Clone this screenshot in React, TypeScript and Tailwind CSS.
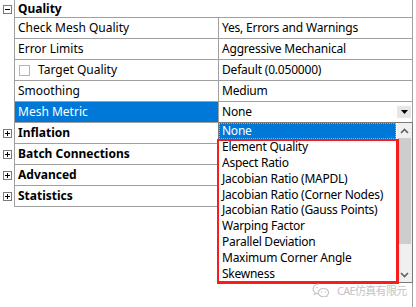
import type { ReactNode } from "react";

const LINE = "border-[#a0a0a0]";

const ExpandBox = ({ open }: { open?: boolean }) => (
  <svg width="9" height="9" viewBox="0 0 9 9" className="block">
    <rect x="0.5" y="0.5" width="8" height="8" fill="#fff" stroke="#7a7a7a" />
    <path d="M2 4.5H7" stroke="#000" />
    {!open && <path d="M4.5 2V7" stroke="#000" />}
  </svg>
);

const Gutter = ({ children }: { children?: ReactNode }) => (
  <div className="w-[14px] shrink-0 flex items-center pl-[3px]">{children}</div>
);

const GroupRow = ({
  label,
  open,
  first,
}: {
  label: string;
  open?: boolean;
  first?: boolean;
}) => (
  <div className={`flex ${first ? "h-[18px]" : "h-[21px]"}`}>
    <Gutter>
      <ExpandBox open={open} />
    </Gutter>
    <div
      className={`flex-1 flex items-center pl-[3px] font-bold border-l border-b ${LINE}`}
    >
      {label}
    </div>
  </div>
);

const PropRow = ({
  label,
  value,
  selected,
}: {
  label: ReactNode;
  value: ReactNode;
  selected?: boolean;
}) => (
  <div className="flex h-[21px]">
    <Gutter />
    <div className={`flex-1 flex border-l border-b ${LINE}`}>
      <div
        className={`w-[204px] shrink-0 flex items-center pl-[3px] border-r ${LINE} ${
          selected ? "bg-[#0078d7] text-white" : ""
        }`}
      >
        {label}
      </div>
      <div className="flex-1 flex items-center pl-[3px] tracking-[-0.2px]">
        {value}
      </div>
    </div>
  </div>
);

const metrics = [
  "Element Quality",
  "Aspect Ratio",
  "Jacobian Ratio (MAPDL)",
  "Jacobian Ratio (Corner Nodes)",
  "Jacobian Ratio (Gauss Points)",
  "Warping Factor",
  "Parallel Deviation",
  "Maximum Corner Angle",
  "Skewness",
];

const Chevron = ({ up }: { up?: boolean }) => (
  <svg width="9" height="6" viewBox="0 0 9 6" className="block">
    <path
      d={up ? "M1 5L4.5 1.5L8 5" : "M1 1L4.5 4.5L8 1"}
      fill="none"
      stroke="#606060"
      strokeWidth="1.6"
    />
  </svg>
);

export default function App() {
  return (
    <div className="relative w-[416px] h-[307px] bg-white overflow-hidden text-[12px] leading-none text-black font-['Noto_Sans',sans-serif]">
      <div className={`w-[413px] h-[307px] border-r ${LINE}`}>
        <GroupRow label="Quality" open first />
        <PropRow label="Check Mesh Quality" value="Yes, Errors and Warnings" />
        <PropRow label="Error Limits" value="Aggressive Mechanical" />
        <PropRow
          label={
            <span className="flex items-center">
              <span className="w-[11px] h-[11px] border border-[#b4b4b4] ml-[1px] mr-[8px]" />
              Target Quality
            </span>
          }
          value="Default (0.050000)"
        />
        <PropRow label="Smoothing" value="Medium" />
        <PropRow
          label="Mesh Metric"
          selected
          value={
            <div className="flex-1 flex items-center justify-between pr-[1px]">
              <span>None</span>
              <span className="w-[14px] h-[12px] bg-[#e6e6e6] flex items-center justify-center">
                <svg width="7" height="4" viewBox="0 0 7 4">
                  <path d="M0 0H7L3.5 4Z" fill="#000" />
                </svg>
              </span>
            </div>
          }
        />
        <GroupRow label="Inflation" />
        <GroupRow label="Batch Connections" />
        <GroupRow label="Advanced" />
        <GroupRow label="Statistics" />
      </div>

      {/* dropdown list */}
      <div className="absolute left-[218px] top-[122px] w-[195px] h-[161px] bg-white border border-[#7a7a7a] flex tracking-[-0.25px]">
        <div className="flex-1 flex flex-col">
          <div className="h-[16px] mr-[1px] bg-[#0078d7] text-white border border-dotted border-[#f0a040] flex items-center pl-[2px]">
            None
          </div>
          {metrics.map((m) => (
            <div key={m} className="h-[16px] flex items-center pl-[3px]">
              {m}
            </div>
          ))}
        </div>
        <div className="w-[15px] bg-[#f0f0f0] flex flex-col">
          <div className="h-[15px] flex items-center justify-center">
            <Chevron up />
          </div>
          <div className="h-[106px] bg-[#cdcdcd] mx-[1px]" />
          <div className="flex-1" />
          <div className="h-[15px] flex items-center justify-center">
            <Chevron />
          </div>
        </div>
      </div>

      {/* annotation */}
      <div className="absolute left-[217px] top-[139px] w-[182px] h-[145px] border-t-2 border-l-2 border-r-[3px] border-b-[3px] border-[#f81d1d]" />

      {/* watermark */}
      <div className="absolute left-[312px] top-[283px] flex items-center gap-[7px] text-[#c4c4c4] text-[11px] font-['Noto_Sans','Noto_Sans_CJK_SC',sans-serif] tracking-[-0.7px]">
        <svg width="18" height="14" viewBox="0 0 18 14" className="block">
          <path
            d="M7 1C3.7 1 1 3.2 1 5.9c0 1.5.8 2.8 2 3.7L2.5 11.5 4.8 10.3c.7.2 1.4.3 2.2.3"
            fill="none"
            stroke="#c4c4c4"
            strokeWidth="1.1"
          />
          <path
            d="M11.5 5.5c-3 0-5.3 1.9-5.3 4.1s2.3 4.1 5.3 4.1c.6 0 1.2-.1 1.8-.3l1.8 1-.4-1.6c1.2-.8 2-1.9 2-3.2 0-2.2-2.3-4.100-5.2-4.1z"
            fill="none"
            stroke="#c4c4c4"
            strokeWidth="1.1"
          />
          <circle cx="5" cy="4.5" r="0.8" fill="#c4c4c4" />
          <circle cx="9.5" cy="9" r="0.7" fill="#c4c4c4" />
          <circle cx="13.5" cy="9" r="0.7" fill="#c4c4c4" />
        </svg>
        <span>CAE仿真有限元</span>
      </div>
    </div>
  );
}
